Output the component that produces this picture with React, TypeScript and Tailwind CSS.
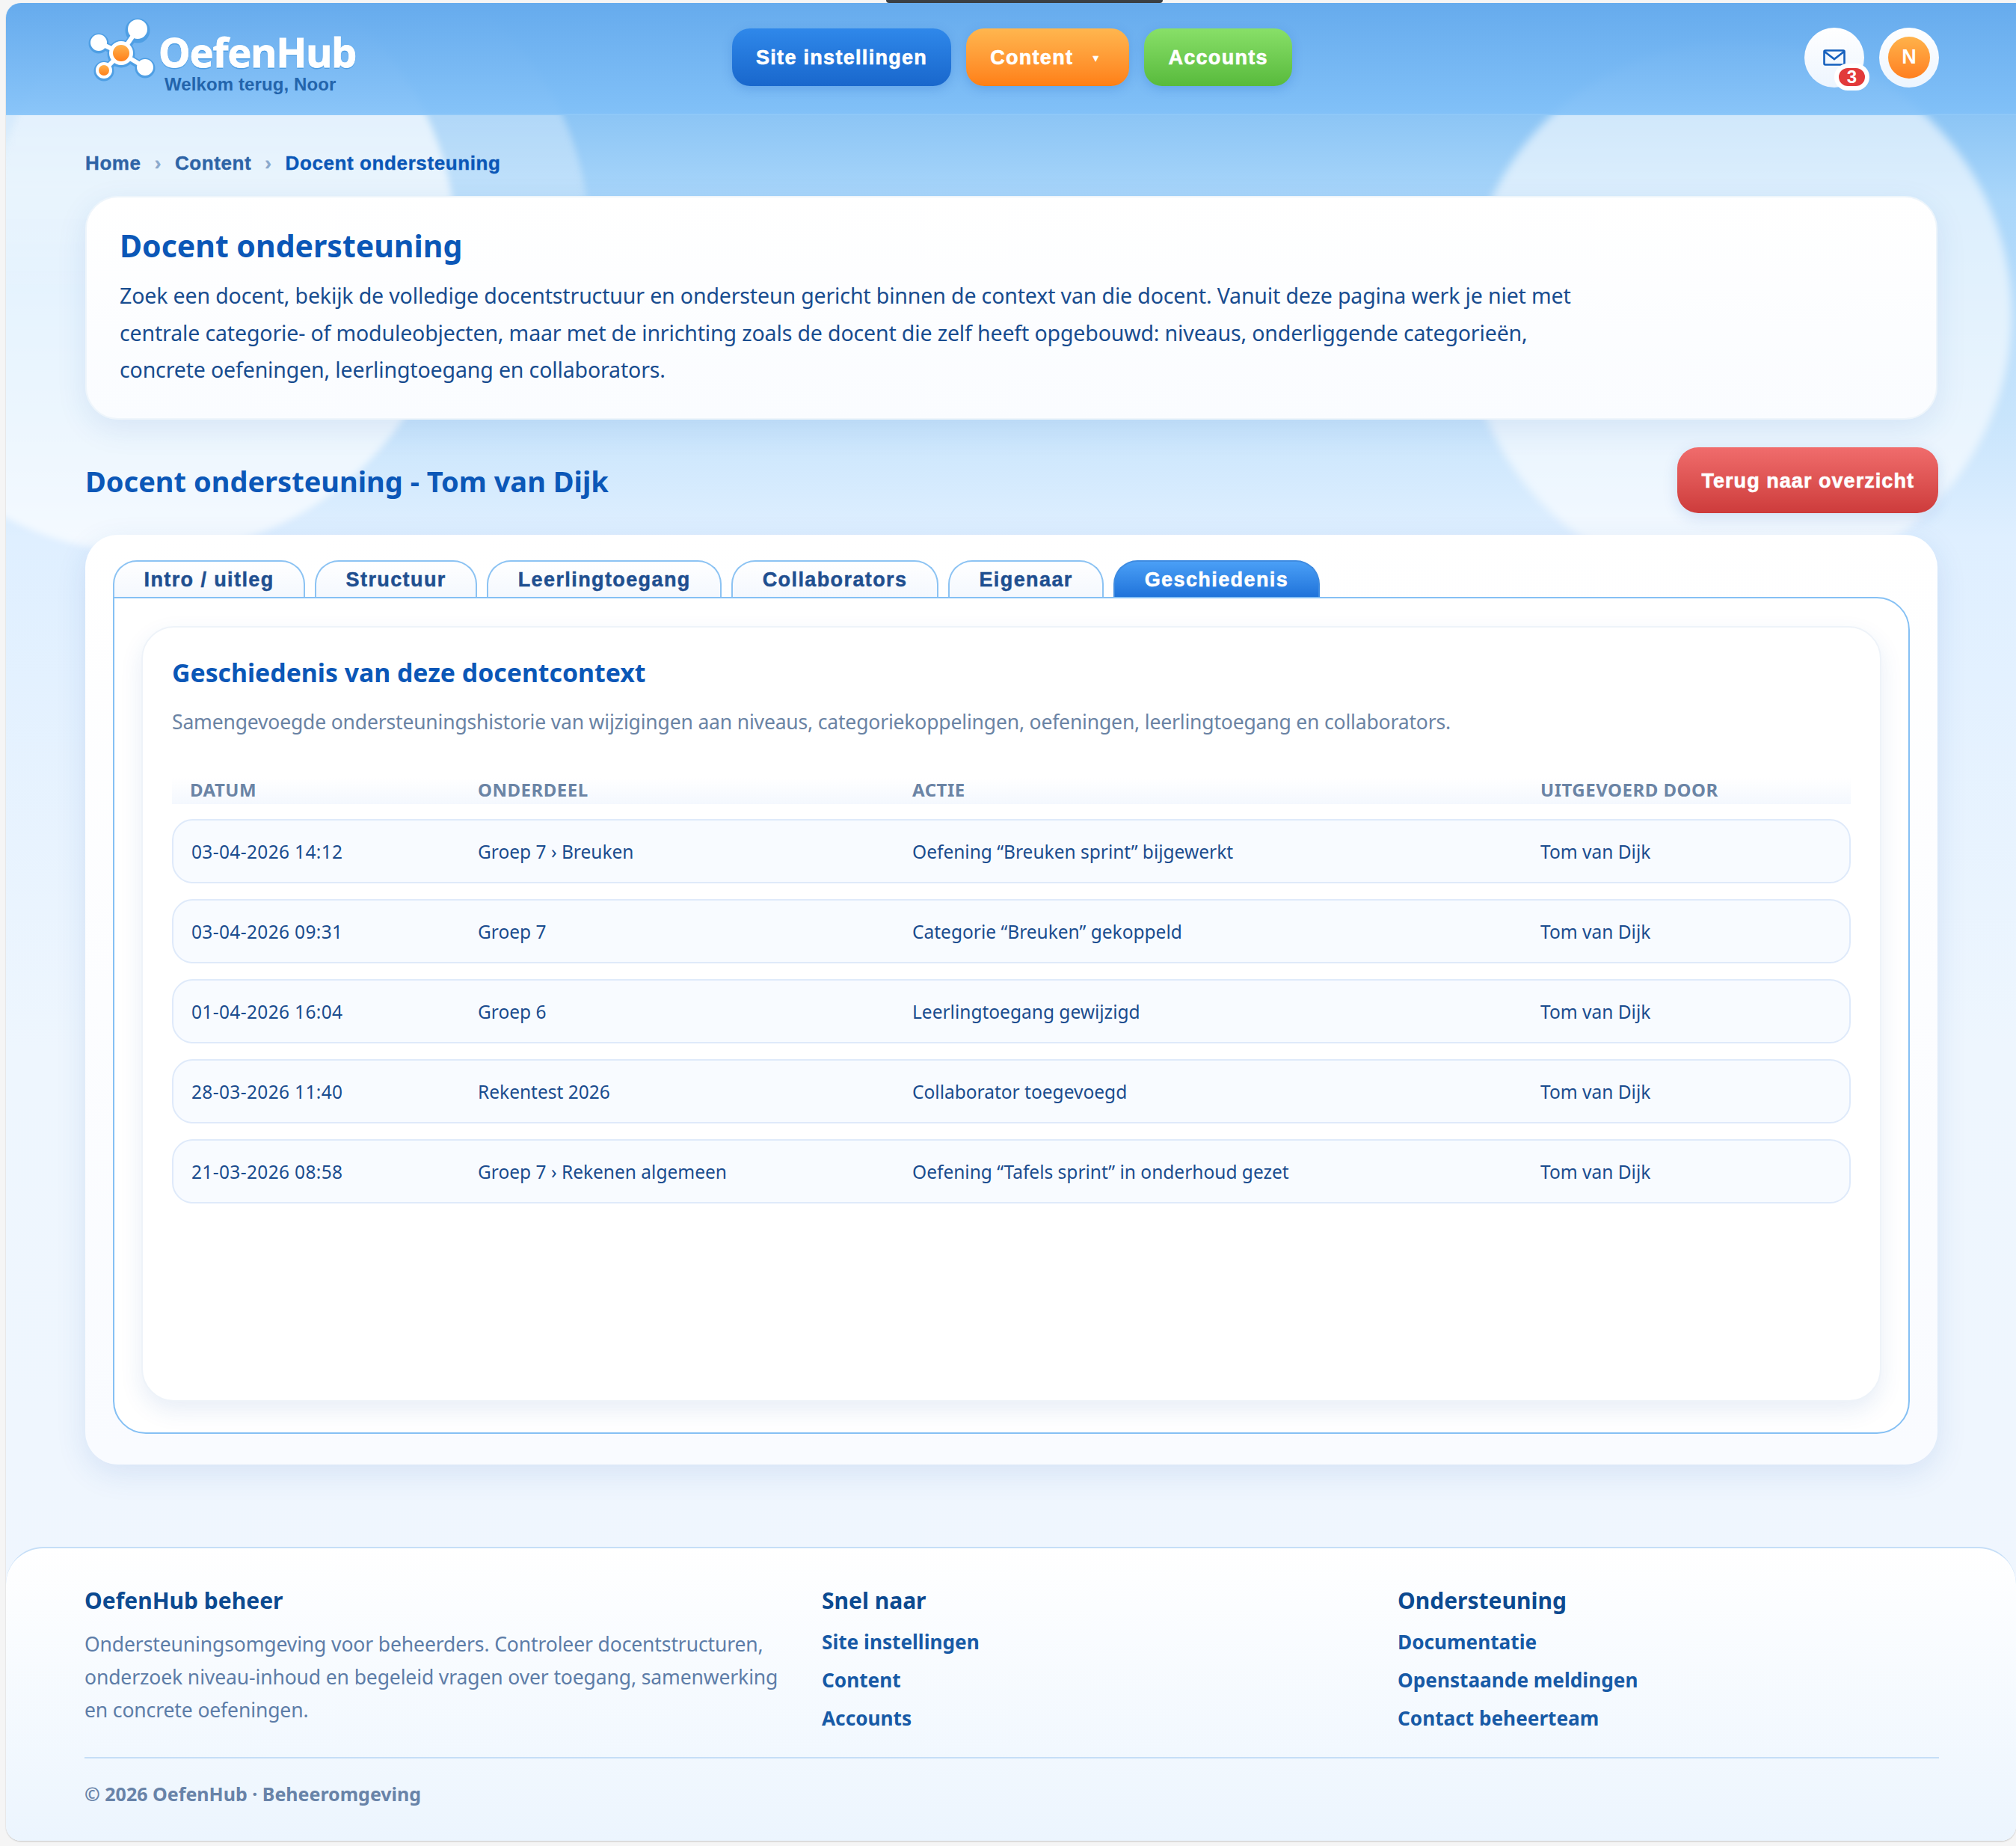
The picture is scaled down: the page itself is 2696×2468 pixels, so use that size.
const rows = [
  ["03-04-2026 14:12", "Groep 7 › Breuken", "Oefening “Breuken sprint” bijgewerkt"],
  ["03-04-2026 09:31", "Groep 7", "Categorie “Breuken” gekoppeld"],
  ["01-04-2026 16:04", "Groep 6", "Leerlingtoegang gewijzigd"],
  ["28-03-2026 11:40", "Rekentest 2026", "Collaborator toegevoegd"],
  ["21-03-2026 08:58", "Groep 7 › Rekenen algemeen", "Oefening “Tafels sprint” in onderhoud gezet"],
];

const tabs = ["Intro / uitleg", "Structuur", "Leerlingtoegang", "Collaborators", "Eigenaar"];

function Logo() {
  return (
    <svg className="absolute left-[-18px] top-[-10px]" width="112" height="100" viewBox="100 20 112 100">
      <g stroke="#4f9fe4" strokeWidth="11" fill="#4f9fe4">
        <path d="M184 44 162 75M133 61 162 75M139 98 162 75M194 94 162 75" />
        <circle cx="184" cy="44" r="11" />
        <circle cx="132" cy="61" r="8" />
        <circle cx="194" cy="94" r="8" />
        <circle cx="162" cy="75" r="13" />
        <circle cx="139" cy="98" r="8" />
      </g>
      <g stroke="#ffffff" strokeWidth="6" fill="#ffffff">
        <path d="M184 42 162 74M132 60 162 74M139 97 162 74M194 93 162 74" />
      </g>
      <circle cx="184" cy="42" r="13" fill="#ffffff" />
      <circle cx="132" cy="60" r="11" fill="#ffffff" />
      <circle cx="194" cy="93" r="11" fill="#ffffff" />
      <circle cx="162" cy="74" r="16" fill="#ffffff" />
      <circle cx="139" cy="97" r="11" fill="#ffffff" />
      <defs>
        <linearGradient id="dot" x1="0" y1="0" x2="0" y2="1">
          <stop offset="0" stopColor="#ffb24d" />
          <stop offset="1" stopColor="#ff7f1a" />
        </linearGradient>
      </defs>
      <circle cx="162" cy="74" r="11" fill="url(#dot)" />
      <circle cx="139" cy="97" r="7" fill="url(#dot)" />
    </svg>
  );
}

function Header() {
  return (
    <header className="relative z-10 flex h-[150px] items-center border-b-2 border-[#8fc8f8] bg-gradient-to-b from-[#66abed] to-[#80c0f8]/90 pb-[3px] pl-[110px] pr-[103px]">
      <div className="relative h-[100px] w-[361px]">
        <Logo />
        <div className="absolute left-[94px] top-[15px] font-['Noto_Sans',sans-serif] text-[54px] leading-[54px] font-bold tracking-[-1.2px] text-white [-webkit-text-stroke:0.8px_white] [text-shadow:0_2px_0_#4f9fe4,0_0_2px_#4f9fe4]">
          OefenHub
        </div>
        <div className="absolute left-[102px] top-[71px] font-['Liberation_Sans',sans-serif] text-[24px] leading-[30px] font-bold tracking-[0.1px] text-[#2364ab]">
          Welkom terug, Noor
        </div>
      </div>
      <nav className="ml-[500px] flex gap-5 font-['Liberation_Sans',sans-serif] text-[27px] font-bold tracking-[1.3px] text-white [-webkit-text-stroke:0.6px_white]">
        <a className="flex h-[77px] items-center rounded-[24px] bg-gradient-to-b from-[#2f88ea] to-[#1967cc] px-8 pt-[2px] shadow-[0_4px_14px_rgba(30,100,200,0.25)]">
          Site instellingen
        </a>
        <a className="flex h-[77px] items-center gap-6 rounded-[24px] bg-gradient-to-b from-[#ffb64e] to-[#ff7f14] pt-[2px] pl-8 pr-[38px] shadow-[0_4px_14px_rgba(30,100,200,0.25)]">
          Content
          <span className="text-[12px]">▼</span>
        </a>
        <a className="flex h-[77px] items-center rounded-[24px] bg-gradient-to-b from-[#88e068] to-[#58ba3c] px-8 pt-[2px] shadow-[0_4px_14px_rgba(30,100,200,0.25)]">
          Accounts
        </a>
      </nav>
      <div className="ml-auto flex gap-5">
        <button className="relative flex h-20 w-20 items-center justify-center rounded-full bg-gradient-to-b from-white to-[#edf5fe]">
          <svg width="30" height="22" viewBox="0 0 30 22" fill="none" stroke="#1560bd" strokeWidth="2.6">
            <rect x="1.5" y="1.5" width="27" height="19" rx="1.5" />
            <path d="M2 3 15 13 28 3" />
          </svg>
          <span className="absolute left-[40px] top-[48px] flex h-9 w-[47px] items-center justify-center rounded-full border-[6px] border-white bg-[#e23a3a] font-['Liberation_Sans',sans-serif] text-[24px] leading-none font-bold text-white">
            3
          </span>
        </button>
        <div className="flex h-20 w-20 items-center justify-center rounded-full bg-gradient-to-b from-white to-[#edf5fe]">
          <div className="flex h-14 w-14 items-center justify-center rounded-full bg-gradient-to-b from-[#ffb24a] to-[#ff7f1e] font-['Liberation_Sans',sans-serif] text-[27px] font-bold text-white">
            N
          </div>
        </div>
      </div>
    </header>
  );
}

function HistoryTable() {
  return (
    <div>
      <div className="mt-[55px] grid h-[35px] grid-cols-[385px_581px_840px_1fr] bg-gradient-to-b from-white to-[#f4f8fe] pl-[24px] text-[24px] leading-[32px] font-bold tracking-[0.5px] text-[#6b84a5]">
        <div>DATUM</div>
        <div>ONDERDEEL</div>
        <div>ACTIE</div>
        <div>UITGEVOERD DOOR</div>
      </div>
      <div className="mt-5 flex flex-col gap-[21px]">
        {rows.map((row) => (
          <div
            key={row[0]}
            className="grid h-[86px] grid-cols-[383px_581px_840px_1fr] items-center rounded-[28px] border-2 border-[#dfeafa] bg-[#f8fbff] pt-[3px] pl-[24px] text-[24.5px] text-[#1a4c8e]"
          >
            <div className="tracking-[0.35px]">{row[0]}</div>
            <div>{row[1]}</div>
            <div>{row[2]}</div>
            <div>Tom van Dijk</div>
          </div>
        ))}
      </div>
    </div>
  );
}

function Footer() {
  return (
    <footer className="mt-[110px] h-[393px] rounded-t-[50px] rounded-b-[20px] border-t-2 border-[#c5def7] bg-gradient-to-b from-white to-[#ecf5fe] pt-[50px] pl-[105px] pr-[103px]">
      <div className="grid h-[229px] grid-cols-[986px_770px_1fr]">
        <div>
          <h3 className="text-[30px] leading-10 font-bold text-[#0c4a90]">OefenHub beheer</h3>
          <p className="mt-4 text-[26.5px] leading-[44px] tracking-[-0.12px] text-[#5d7da8]">
            Ondersteuningsomgeving voor beheerders. Controleer docentstructuren,
            <br />
            onderzoek niveau-inhoud en begeleid vragen over toegang, samenwerking
            <br />
            en concrete oefeningen.
          </p>
        </div>
        <div>
          <h3 className="text-[30px] leading-10 font-bold text-[#0c4a90]">Snel naar</h3>
          <div className="mt-[10px] flex flex-col text-[26.2px] leading-[51px] font-bold text-[#175aa6]">
            <a>Site instellingen</a>
            <a>Content</a>
            <a>Accounts</a>
          </div>
        </div>
        <div>
          <h3 className="text-[30px] leading-10 font-bold text-[#0c4a90]">Ondersteuning</h3>
          <div className="mt-[10px] flex flex-col text-[26.2px] leading-[51px] font-bold text-[#175aa6]">
            <a>Documentatie</a>
            <a>Openstaande meldingen</a>
            <a>Contact beheerteam</a>
          </div>
        </div>
      </div>
      <div className="border-t-2 border-[#c5def7] pt-[29px] text-[25px] leading-9 font-bold text-[#6883a8]">
        © 2026 OefenHub · Beheeromgeving
      </div>
    </footer>
  );
}

export default function App() {
  return (
    <div className="relative min-h-[2468px] bg-[#f5f5f5] pt-1 pl-2 font-['Noto_Sans',sans-serif]">
      <div className="absolute top-0 left-[1185px] h-1 w-[370px] rounded-b-md bg-[#3a3f44]" />
      <div className="relative h-[2457px] overflow-hidden rounded-tl-[20px] rounded-b-[20px] bg-[linear-gradient(180deg,#8cc5f5_150px,#a9d6fa_262px,#c9e5fc_560px,#dfefff_715px,#eef6fe_1400px,#f0f6fe_100%)] shadow-[0_1px_2px_rgba(0,0,0,0.2)]">
        <div className="absolute top-[-84px] left-[-218px] h-[820px] w-[820px] rounded-full bg-white/65 blur-[5px]" />
        <div className="absolute top-[-84px] left-[-20px] h-[800px] w-[800px] rounded-full bg-[linear-gradient(180deg,rgba(255,255,255,0.4),rgba(255,255,255,0.3)_40%,transparent_60%)] blur-[5px]" />
        <div className="absolute top-[51px] left-[1952px] h-[730px] w-[730px] rounded-full bg-white/60 blur-[6px]" />

        <Header />

        <main className="relative pr-[105px] pl-[106px]">
          <div className="flex h-[108px] items-center gap-[18px] pt-[46px] pb-[26px] font-['Liberation_Sans',sans-serif] text-[26px] font-bold tracking-[0.6px] text-[#2e64a6] [-webkit-text-stroke:0.4px]">
            <span>Home</span>
            <span className="text-[#8ba9cc]">›</span>
            <span>Content</span>
            <span className="text-[#8ba9cc]">›</span>
            <span className="text-[#0b57b7]">Docent ondersteuning</span>
          </div>

          <section className="h-[299px] rounded-[44px] border-2 border-[#eef5fb] bg-gradient-to-b from-white to-[#fafcff] pt-[38px] pl-[44px] shadow-[0_12px_40px_rgba(30,90,180,0.1)]">
            <h1 className="text-[41px] leading-[52px] font-bold text-[#0b57b7]">Docent ondersteuning</h1>
            <p className="mt-[17px] text-[28.5px] leading-[49.5px] tracking-[-0.14px] text-[#184c8f]">
              Zoek een docent, bekijk de volledige docentstructuur en ondersteun gericht binnen de context van die docent. Vanuit deze pagina werk je niet met
              <br />
              centrale categorie- of moduleobjecten, maar met de inrichting zoals de docent die zelf heeft opgebouwd: niveaus, onderliggende categorieën,
              <br />
              concrete oefeningen, leerlingtoegang en collaborators.
            </p>
          </section>

          <div className="mt-[37px] flex items-center justify-between">
            <h2 className="pt-[2px] text-[38px] font-bold text-[#0b57b7]">Docent ondersteuning - Tom van Dijk</h2>
            <a className="-mr-px flex h-[88px] items-center rounded-[28px] bg-gradient-to-b from-[#f06c6c] to-[#cd3b3b] px-8 pt-[2px] font-['Liberation_Sans',sans-serif] text-[27px] font-bold tracking-[1.05px] text-white shadow-[0_6px_20px_rgba(30,90,180,0.15)] [-webkit-text-stroke:0.6px_white]">
              Terug naar overzicht
            </a>
          </div>

          <section className="mt-[29px] h-[1243px] rounded-[44px] bg-gradient-to-b from-white to-[#f9fbff] pt-[34px] pr-[37px] pl-[37px] shadow-[0_12px_40px_rgba(30,90,180,0.12)]">
            <div className="flex h-[49px] gap-[13px] font-['Liberation_Sans',sans-serif] text-[27px] font-bold tracking-[1.4px] [-webkit-text-stroke:0.5px]">
              {tabs.map((t) => (
                <div
                  key={t}
                  className="flex h-[49px] items-center rounded-t-[32px] border-x-2 border-t-2 border-[#8cc3f3] bg-gradient-to-b from-white to-[#f4f8fe] px-[39.5px] pt-[2px] text-[#1f4f90]"
                >
                  {t}
                </div>
              ))}
              <div className="flex h-[49px] items-center rounded-t-[32px] border-x-2 border-t-2 border-[#3f8be0] bg-gradient-to-b from-[#4a9ff6] to-[#1f73da] px-[39.5px] pt-[2px] text-white">
                Geschiedenis
              </div>
            </div>
            <div className="h-[1119px] rounded-tr-[44px] rounded-b-[44px] border-2 border-[#85c0f4] bg-white pt-[37px] pr-[36px] pl-[36px]">
              <div className="h-[1037px] rounded-[44px] border-2 border-[#eef3f9] bg-white pt-[36px] pr-[39px] pl-[39px] shadow-[0_12px_30px_rgba(30,90,180,0.1)]">
                <h2 className="text-[33.8px] leading-[48px] font-bold text-[#0b57b7]">Geschiedenis van deze docentcontext</h2>
                <p className="mt-[22px] text-[26.5px] leading-10 tracking-[-0.17px] text-[#6a83a4]">
                  Samengevoegde ondersteuningshistorie van wijzigingen aan niveaus, categoriekoppelingen, oefeningen, leerlingtoegang en collaborators.
                </p>
                <HistoryTable />
              </div>
            </div>
          </section>
        </main>

        <Footer />
      </div>
    </div>
  );
}
